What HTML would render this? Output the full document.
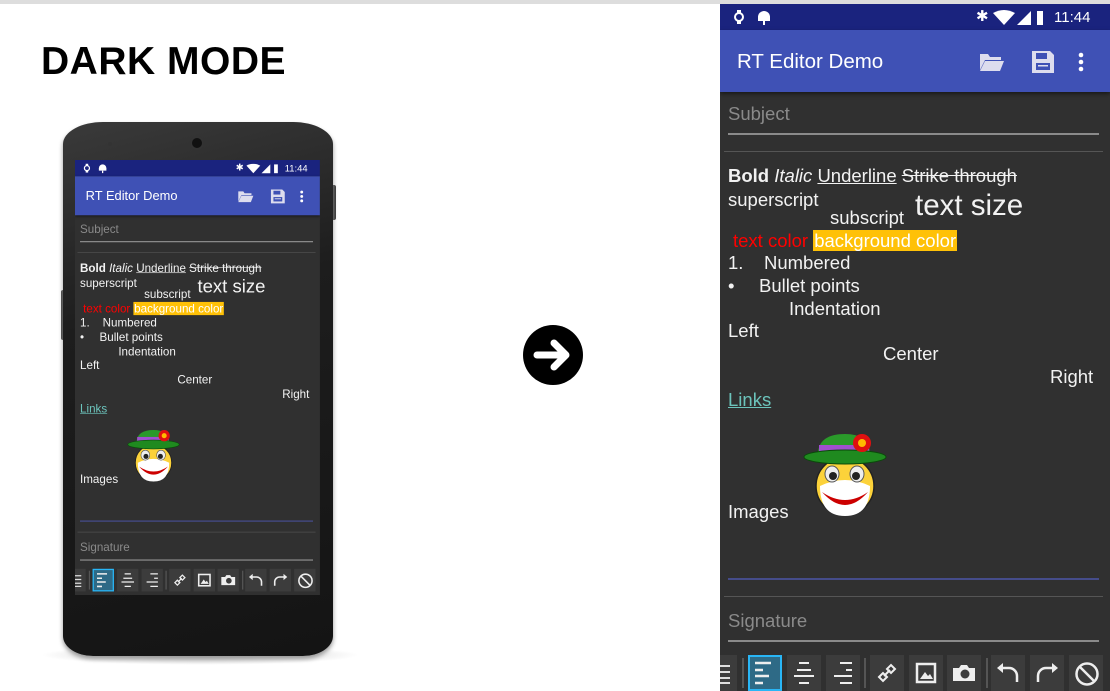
<!DOCTYPE html>
<html><head><meta charset="utf-8"><style>
*{margin:0;padding:0;box-sizing:border-box}
html,body{width:1110px;height:691px;overflow:hidden}
body{background:#fff;position:relative;font-family:"Liberation Sans",sans-serif}
.abs{position:absolute}
.scr{position:absolute;width:390px;height:687px;background:#303030;overflow:hidden;color:#f2f2f2}
.scr .t{position:absolute;white-space:nowrap;font-size:18.5px;line-height:20px}
.btn{position:absolute;top:651px;width:34px;height:36px;background:#3c3c3c}
.sep{position:absolute;top:654px;width:2px;height:30px;background:#555}
</style></head><body>
<div class="abs" style="left:0;top:0;width:1110px;height:4px;background:#ddd"></div>
<div class="abs" style="left:41px;top:40px;font-size:39px;font-weight:bold;color:#000;letter-spacing:0.5px">DARK MODE</div>
<svg class="abs" style="left:523px;top:325px" width="60" height="60" viewBox="0 0 60 60"><circle cx="30" cy="30" r="30" fill="#000"/><path d="M14 30H42M31 18L43 30L31 42" stroke="#fff" stroke-width="7" fill="none" stroke-linecap="round" stroke-linejoin="round"/></svg>

<!-- phone -->
<div class="abs" style="left:40px;top:645px;width:320px;height:20px;border-radius:50%;background:radial-gradient(#bbb,rgba(255,255,255,0) 70%)"></div>
<div class="abs" style="left:331px;top:185px;width:5px;height:35px;background:#333;border-radius:2px"></div>
<div class="abs" style="left:61px;top:290px;width:4px;height:50px;background:#333;border-radius:2px"></div>
<div class="abs" style="left:63px;top:122px;width:270px;height:534px;background:linear-gradient(165deg,#3a3a3a,#1d1d1d 35%,#141414);border-radius:40px 40px 30px 30px / 22px 22px 20px 20px;box-shadow:0 3px 5px #999"></div>
<div class="abs" style="left:190px;top:136px;width:14px;height:14px;border-radius:50%;background:#111;border:2px solid #333"></div>
<div class="abs" style="left:108px;top:142px;width:4px;height:4px;border-radius:50%;background:#333"></div>

<div id="ph" class="abs" style="left:75px;top:160px;width:245px;height:435px;overflow:hidden"></div>

<div id="main" class="scr" style="left:720px;top:4px">
<div class="abs" style="left:0;top:0;width:390px;height:26px;background:#1a237e"></div>
<svg class="abs" style="left:12px;top:5px" width="40" height="16"><circle cx="7" cy="8" r="4" fill="none" stroke="#fff" stroke-width="2"/><rect x="5" y="1" width="4" height="3" fill="#fff"/><rect x="5" y="12" width="4" height="3" fill="#fff"/><path d="M26 8a6 6 0 0 1 12 0v4h-12z" fill="#fff"/><rect x="31" y="12" width="2" height="4" fill="#fff"/></svg>
<div class="abs" style="left:256px;top:3px;color:#fff;font-size:15px">✱</div>
<svg class="abs" style="left:273px;top:6px" width="50" height="16"><path d="M0 3Q11 -3 22 3L11 15z" fill="#fff"/><path d="M24 15L38 1V15z" fill="#fff"/><rect x="44" y="1" width="7" height="14" fill="#fff"/></svg>
<div class="abs" style="left:334px;top:5px;color:#fff;font-size:15px">11:44</div>
<div class="abs" style="left:0;top:26px;width:390px;height:62px;background:#3f51b5;box-shadow:0 2px 4px rgba(0,0,0,.5)"></div>
<div class="abs" style="left:17px;top:46px;color:#fff;font-size:20.5px">RT Editor Demo</div>
<svg class="abs" style="left:259px;top:48px" width="26" height="20"><path d="M1 2h8l2 3h11v3H6L1 18z" fill="#dde"/><path d="M6 9h19l-4 10H1z" fill="#dde"/></svg>
<svg class="abs" style="left:311px;top:46px" width="24" height="24"><path d="M1 1h18l4 4v18H1z" fill="#dde"/><rect x="5" y="3" width="11" height="6" fill="#3f51b5"/><rect x="5" y="13" width="14" height="7" fill="#3f51b5"/><rect x="7" y="15" width="10" height="1.5" fill="#dde"/></svg>
<svg class="abs" style="left:358px;top:48px" width="6" height="20"><circle cx="3" cy="3" r="2.3" fill="#fff"/><circle cx="3" cy="10" r="2.3" fill="#fff"/><circle cx="3" cy="17" r="2.3" fill="#fff"/></svg>

<div class="t" style="left:8px;top:100px;color:#8a8a8a">Subject</div>
<div class="abs" style="left:8px;top:129px;width:371px;height:2px;background:#8a8a8a"></div>
<div class="abs" style="left:4px;top:147px;width:379px;height:1px;background:#555"></div>

<div class="t" style="left:8px;top:162px"><b>Bold</b> <i>Italic</i> <u>Underline</u> <s>Strike through</s></div>
<div class="t" style="left:8px;top:186px">superscript</div>
<div class="t" style="left:110px;top:204px">subscript</div>
<div class="t" style="left:195px;top:186px;font-size:29.5px;line-height:32px">text size</div>
<div class="t" style="left:13px;top:227px;color:#f00">text color <span style="background:#ffc107;color:#fff;padding:0 1px">background color</span></div>
<div class="t" style="left:8px;top:249px">1.&nbsp;&nbsp;&nbsp;&nbsp;Numbered</div>
<div class="t" style="left:8px;top:272px">•</div>
<div class="t" style="left:39px;top:272px">Bullet points</div>
<div class="t" style="left:69px;top:295px">Indentation</div>
<div class="t" style="left:8px;top:317px">Left</div>
<div class="t" style="left:163px;top:340px">Center</div>
<div class="t" style="left:330px;top:363px">Right</div>
<div class="t" style="left:8px;top:386px;color:#6cc4bc;text-decoration:underline">Links</div>

<svg class="abs" style="left:82px;top:426px" width="86" height="92" viewBox="0 0 86 92">
<circle cx="43" cy="56" r="29" fill="#fcd23a" stroke="#222" stroke-width="1.5"/>
<path d="M18 56Q43 44 68 56Q68 86 43 86Q18 86 18 56z" fill="#fff"/>
<path d="M20 62Q43 88 66 62Q43 78 20 62z" fill="#c00"/>
<ellipse cx="30" cy="44" rx="7" ry="8" fill="#eee" stroke="#555"/><ellipse cx="55" cy="44" rx="7" ry="8" fill="#eee" stroke="#555"/>
<circle cx="31" cy="46" r="4" fill="#222"/><circle cx="54" cy="46" r="4" fill="#222"/>
<path d="M16 22Q18 4 43 4Q66 4 68 22z" fill="#2a9a2a"/>
<rect x="17" y="15" width="50" height="7" fill="#a050d0"/>
<ellipse cx="43" cy="27" rx="41" ry="7" fill="#1f8a1f" stroke="#0a4a0a"/>
<circle cx="60" cy="13" r="9" fill="#e01010"/><circle cx="60" cy="13" r="4" fill="#fb0"/>
</svg>
<div class="t" style="left:8px;top:498px">Images</div>

<div class="abs" style="left:8px;top:574px;width:371px;height:2px;background:#454c8a"></div>
<div class="abs" style="left:4px;top:592px;width:379px;height:1px;background:#555"></div>
<div class="t" style="left:8px;top:607px;color:#8a8a8a">Signature</div>
<div class="abs" style="left:8px;top:636px;width:371px;height:2px;background:#8a8a8a"></div>

<div class="btn" style="left:-10px;width:27px"></div>
<svg class="abs" style="left:0;top:660px" width="12" height="20"><path d="M0 2h10M0 8h10M0 14h10M0 19h10" stroke="#ddd" stroke-width="2"/></svg>
<div class="sep" style="left:22px"></div>
<div class="btn" style="left:28px;background:#2e6a86;border:2px solid #29b6f6"></div>
<svg class="abs" style="left:35px;top:657px" width="22" height="26"><path d="M0 2h16M0 9h8M0 15h14M0 22h8" stroke="#eee" stroke-width="2.5"/></svg>
<div class="btn" style="left:67px"></div>
<svg class="abs" style="left:73px;top:657px" width="22" height="26"><path d="M6 2h10M4 9h14M1 15h20M6 22h10" stroke="#eee" stroke-width="2"/></svg>
<div class="btn" style="left:106px"></div>
<svg class="abs" style="left:112px;top:657px" width="22" height="26"><path d="M8 2h12M14 9h6M2 15h18M8 22h12" stroke="#eee" stroke-width="2"/></svg>
<div class="sep" style="left:144px"></div>
<div class="btn" style="left:150px"></div>
<svg class="abs" style="left:156px;top:658px" width="22" height="22"><path d="M3 15l4-4 4 4-4 4zM11 7l4-4 4 4-4 4zM8 14l6-6" stroke="#eee" stroke-width="2" fill="none"/></svg>
<div class="btn" style="left:189px"></div>
<svg class="abs" style="left:195px;top:658px" width="22" height="22"><rect x="2" y="2" width="18" height="18" fill="none" stroke="#eee" stroke-width="2.5"/><path d="M5 17l5-7 3 4 2-2 3 5z" fill="#eee"/></svg>
<div class="btn" style="left:227px"></div>
<svg class="abs" style="left:232px;top:659px" width="24" height="20"><path d="M1 5h6l2-3h6l2 3h6v13H1z" fill="#eee"/><circle cx="13" cy="11" r="4.5" fill="#3c3c3c"/></svg>
<div class="sep" style="left:266px"></div>
<div class="btn" style="left:271px"></div>
<svg class="abs" style="left:276px;top:658px" width="24" height="24"><path d="M5 6h8a8 8 0 0 1 8 8v6" stroke="#eee" stroke-width="2.5" fill="none"/><path d="M1 6l6-5v10z" fill="#eee"/></svg>
<div class="btn" style="left:310px"></div>
<svg class="abs" style="left:315px;top:658px" width="24" height="24"><path d="M19 6h-8a8 8 0 0 0-8 8v6" stroke="#eee" stroke-width="2.5" fill="none"/><path d="M23 6l-6-5v10z" fill="#eee"/></svg>
<div class="btn" style="left:349px"></div>
<svg class="abs" style="left:354px;top:657px" width="26" height="26"><circle cx="13" cy="13" r="10.5" fill="none" stroke="#eee" stroke-width="2.5"/><path d="M6 6l14 14" stroke="#eee" stroke-width="2.5"/></svg>
</div>

<script>
var m=document.getElementById('main').cloneNode(true);
m.id='';m.style.left='0';m.style.top='0';m.style.height='700px';
m.style.transform='scale(0.628)';m.style.transformOrigin='0 0';
document.getElementById('ph').appendChild(m);
</script>
</body></html>
